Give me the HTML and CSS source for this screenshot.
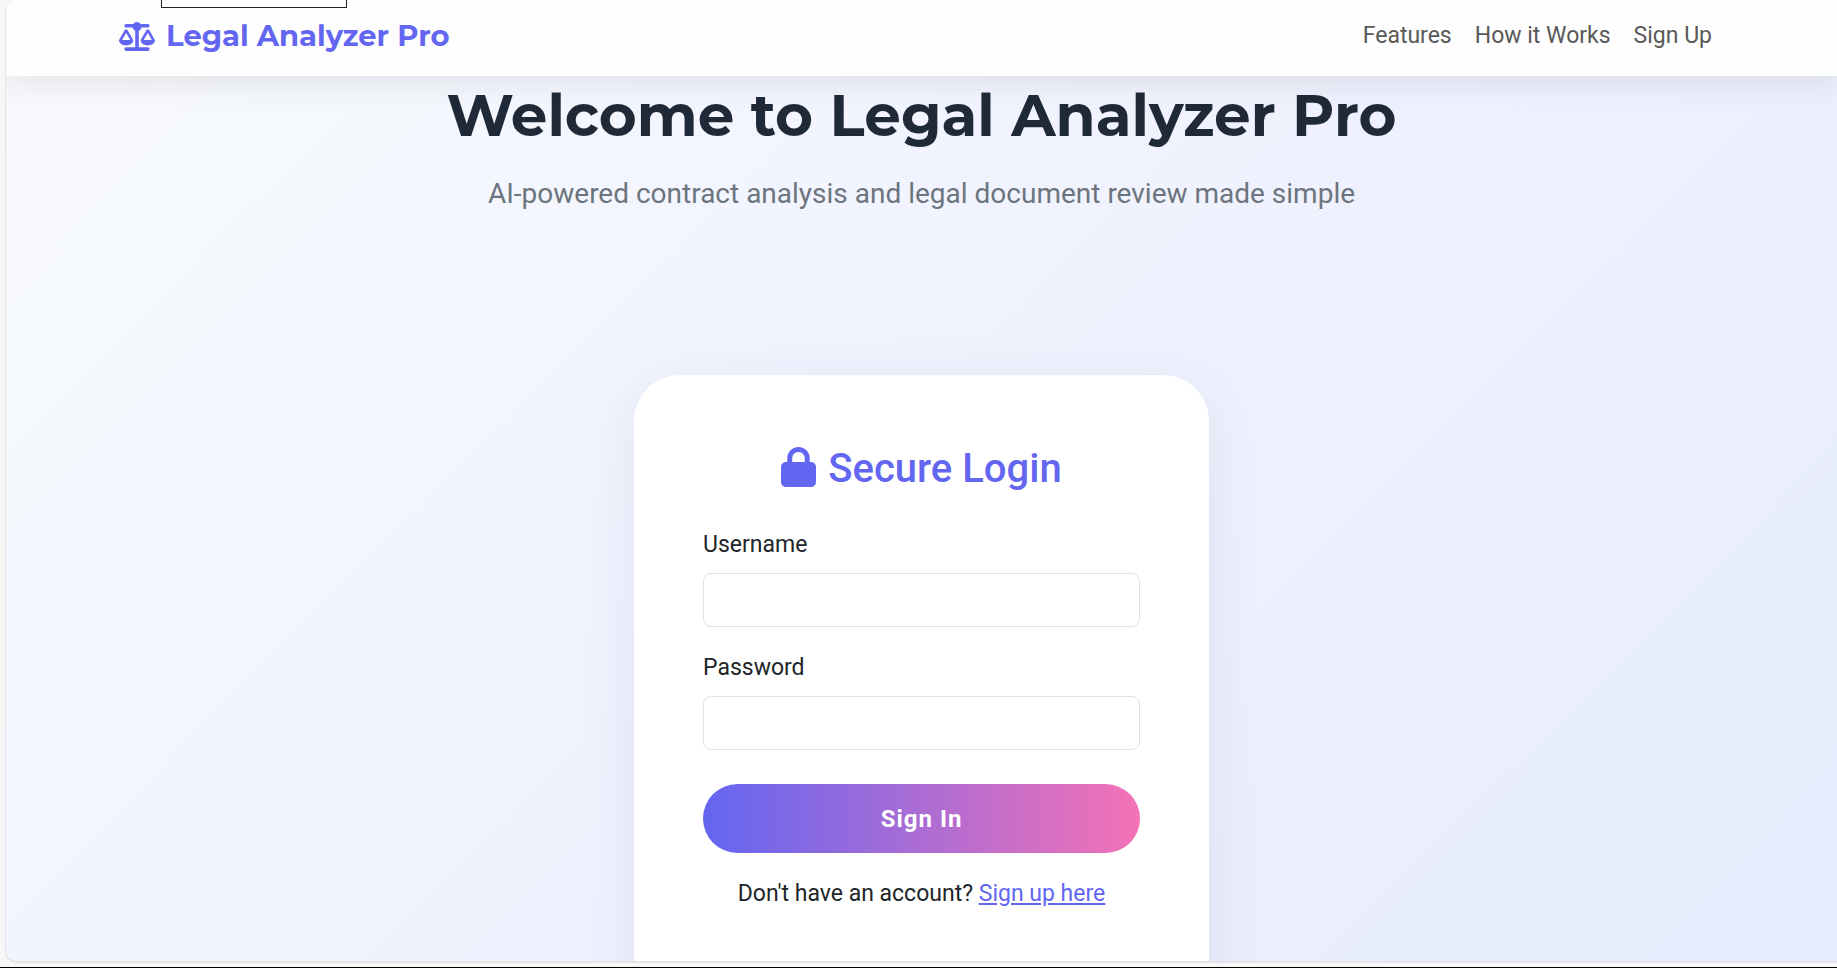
FILE: index.html
```html
<!DOCTYPE html>
<html lang="en">
<head>
<meta charset="utf-8">
<meta name="viewport" content="width=device-width, initial-scale=1">
<title>Legal Analyzer Pro</title>
<link rel="stylesheet" href="styles.css">
</head>
<body>
<div class="window">
  <div class="page">
    <div class="hint" aria-hidden="true"></div>
    <header class="navbar">
      <a class="brand" href="#">
        <svg class="brand-icon" viewBox="0 0 640 512" aria-hidden="true"><path d="M384 32H512c17.700 0 32 14.300 32 32s-14.300 32-32 32H398.400c-5.200 25.800-22.900 47.100-46.400 57.300V448H512c17.700 0 32 14.300 32 32s-14.300 32-32 32H128c-17.700 0-32-14.300-32-32s14.300-32 32-32H288V153.300c-23.500-10.300-41.200-31.600-46.400-57.300H128c-17.700 0-32-14.300-32-32s14.300-32 32-32H256c14.600-19.400 37.800-32 64-32s49.400 12.600 64 32zm55.600 288H584.400L512 195.800 439.600 320zM512 416c-62.900 0-115.200-34-126-78.900c-2.600-11 1-22.300 6.700-32.100l95.200-163.200c5-8.600 14.200-13.800 24.100-13.800s19.100 5.300 24.100 13.800l95.200 163.200c5.700 9.800 9.300 21.100 6.700 32.100C627.200 382 574.900 416 512 416zM126.800 195.800L54.400 320H199.300L126.800 195.800zM.9 337.100c-2.600-11 1-22.300 6.700-32.100l95.200-163.200c5-8.600 14.200-13.800 24.100-13.800s19.100 5.300 24.100 13.800l95.200 163.200c5.700 9.800 9.300 21.100 6.700 32.100C242 382 189.700 416 126.800 416S11.700 382 .9 337.100z"/></svg>
        <span>Legal Analyzer Pro</span>
      </a>
      <nav class="nav-links">
        <a href="#">Features</a>
        <a href="#">How it Works</a>
        <a href="#">Sign Up</a>
      </nav>
    </header>
    <main class="content">
      <section class="hero">
        <h1>Welcome to Legal Analyzer Pro</h1>
        <p>AI-powered contract analysis and legal document review made simple</p>
      </section>
      <form class="card">
        <h2>
          <svg class="lock-icon" viewBox="0 0 448 512" aria-hidden="true"><path d="M144 144v48H304V144c0-44.200-35.800-80-80-80s-80 35.800-80 80zM80 192V144C80 64.500 144.500 0 224 0s144 64.500 144 144v48h16c35.300 0 64 28.700 64 64V448c0 35.300-28.700 64-64 64H64c-35.300 0-64-28.700-64-64V256c0-35.300 28.700-64 64-64H80z"/></svg>
          <span>Secure Login</span>
        </h2>
        <div class="field">
          <label for="username">Username</label>
          <input id="username" type="text">
        </div>
        <div class="field">
          <label for="password">Password</label>
          <input id="password" type="password">
        </div>
        <button class="submit" type="button">Sign In</button>
        <p class="signup">Don't have an account? <a href="#">Sign up here</a></p>
      </form>
    </main>
  </div>
</div>
</body>
</html>
```
FILE: styles.css
```css
* {
  box-sizing: border-box;
}

body {
  margin: 0;
  background: #f7f7f7;
  color: #212529;
  font-family: Roboto, "Liberation Sans", sans-serif;
  font-size: 23px;
  line-height: 34px;
}

.window {
  height: 100vh;
  padding: 0 0 4px 5px;
  border-bottom: 1px solid #000;
}

.page {
  position: relative;
  display: flex;
  flex-direction: column;
  height: 100%;
  overflow: hidden;
  border: solid #e4e4e6;
  border-width: 0 0 2px 1px;
  border-radius: 12px 0 0 12px;
  background: linear-gradient(135deg, #f8fafc 0%, #f2f5ff 35%, #edf0fd 65%, #e5ecfd 100%);
}

.hint {
  position: absolute;
  z-index: 2;
  top: 0;
  left: 155px;
  width: 186px;
  height: 8px;
  border: 1px solid #222;
  border-top: 0;
  background: #fff;
}

.navbar {
  position: relative;
  z-index: 1;
  display: flex;
  flex: none;
  align-items: center;
  justify-content: space-between;
  padding: 19px 125px 23px 113px;
  background: #fefefe;
  box-shadow: 0 10px 30px rgba(0, 0, 0, 0.08);
}

.brand {
  display: flex;
  align-items: center;
  gap: 11px;
  color: #6366f1;
  font-family: Montserrat, Inter, "Open Sans", sans-serif;
  font-size: 29px;
  font-weight: 700;
  text-decoration: none;
}

.brand-icon {
  width: 36px;
  height: 29px;
  fill: currentColor;
}

.nav-links {
  display: flex;
  gap: 23px;
}

.nav-links a {
  color: #595959;
  text-decoration: none;
}

.content {
  flex: 1;
  min-height: 0;
  overflow: hidden;
}

.hero {
  padding-top: 5px;
  text-align: center;
}

.hero h1 {
  margin: 0 0 23px;
  color: #1f2937;
  font-family: Montserrat, Inter, "Open Sans", sans-serif;
  font-size: 58px;
  font-weight: 700;
  line-height: 69px;
}

.hero p {
  margin: 0;
  color: #6c757d;
  font-size: 28px;
  line-height: 42px;
}

.card {
  width: 575px;
  min-height: 640px;
  margin: 160px auto 0;
  padding: 69px;
  border-radius: 46px;
  background: #fff;
  box-shadow: 0 12px 58px rgba(31, 38, 80, 0.08);
}

.card h2 {
  display: flex;
  align-items: center;
  justify-content: center;
  gap: 12px;
  margin: 0 0 34px;
  color: #6366f1;
  font-size: 40px;
  font-weight: 500;
  line-height: 50px;
}

.lock-icon {
  width: 35px;
  height: 40px;
  margin-bottom: 4px;
  fill: currentColor;
}

.field {
  display: flex;
  flex-direction: column;
  gap: 11px;
  margin-bottom: 24px;
}

.field input {
  width: 100%;
  height: 54px;
  padding: 8px 16px;
  border: 1px solid #dee2e6;
  border-radius: 8px;
  background: #fff;
  color: inherit;
  font: inherit;
}

.submit {
  display: block;
  width: 100%;
  height: 69px;
  margin-top: 34px;
  border: 0;
  border-radius: 35px;
  background: linear-gradient(90deg, #6366f1, #f472b6);
  color: #fff;
  font: inherit;
  font-size: 24px;
  font-weight: 700;
  letter-spacing: 1px;
}

.signup {
  margin: 24px 0 0;
  text-align: center;
}

.signup a {
  color: #6366f1;
}
```
